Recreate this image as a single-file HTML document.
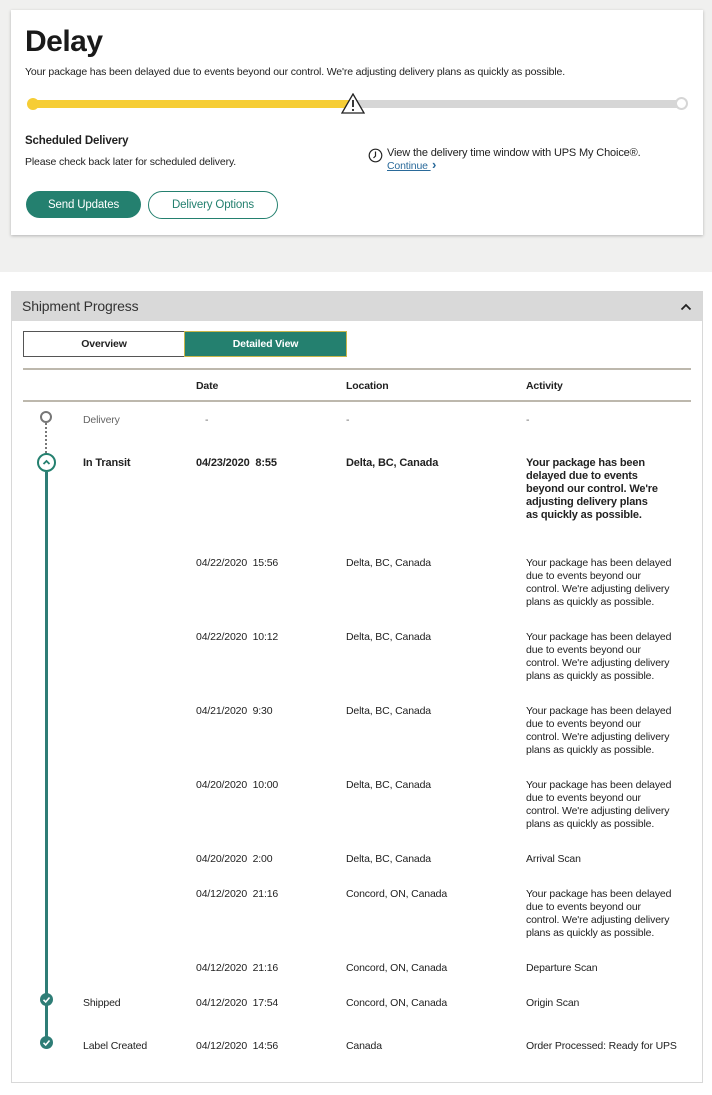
<!DOCTYPE html>
<html><head><meta charset="utf-8"><style>
*{margin:0;padding:0;box-sizing:border-box}
body{width:712px;height:1095px;background:#fff;font-family:"Liberation Sans",sans-serif;font-size:10.5px;letter-spacing:-0.15px;color:#222;position:relative;overflow:hidden}
.a{position:absolute;white-space:nowrap}
.top{position:absolute;left:0;top:0;width:712px;height:272px;background:#f0f0ef}
.card{position:absolute;left:11px;top:10px;width:692px;height:225px;background:#fff;box-shadow:0 1px 3px rgba(0,0,0,.25)}
.panel{position:absolute;left:11px;top:291px;width:692px;height:792px;border:1px solid #d8d8d8}
.hdr{position:absolute;left:0;top:0;width:690px;height:29px;background:#d9d9d9}
.act{line-height:13px}
</style></head><body>
<div class="top"></div>
<div class="card"></div>
<div class="a" style="left:25px;top:25px;font-size:30px;font-weight:bold;letter-spacing:-0.5px;color:#1a1a1a">Delay</div>
<div class="a" style="left:25px;top:66px">Your package has been delayed due to events beyond our control. We're adjusting delivery plans as quickly as possible.</div>
<div class="a" style="left:32px;top:100px;width:320px;height:8px;background:#f6cd35"></div>
<div class="a" style="left:27px;top:98px;width:12px;height:12px;border-radius:50%;background:#f6cd35"></div>
<div class="a" style="left:352px;top:100px;width:330px;height:8px;background:#d6d6d6"></div>
<div class="a" style="left:675px;top:97px;width:13px;height:13px;border-radius:50%;background:#fff;border:2px solid #d6d6d6"></div>
<svg class="a" style="left:341px;top:93px" width="24" height="21" viewBox="0 0 24 21"><path d="M12 1 L23 20 L1 20 Z" fill="#fff" stroke="#222" stroke-width="1.3"/><path d="M12 7v7M12 16v2" stroke="#222" stroke-width="1.8"/></svg>
<div class="a" style="left:25px;top:135px;font-weight:bold;font-size:11.5px">Scheduled Delivery</div>
<div class="a" style="left:25px;top:156px">Please check back later for scheduled delivery.</div>
<svg class="a" style="left:368px;top:148px" width="15" height="15" viewBox="0 0 15 15"><circle cx="7.5" cy="7.5" r="6.3" fill="none" stroke="#222" stroke-width="1.2"/><path d="M7.5 3.5v4.5L5.5 10" fill="none" stroke="#222" stroke-width="1.2"/></svg>
<div class="a" style="left:387px;top:147px;font-size:11px">View the delivery time window with UPS My Choice®.</div>
<div class="a" style="left:387px;top:160px;color:#2a6a9a;text-decoration:underline">Continue&nbsp;</div>
<div class="a" style="left:432px;top:157px;color:#2a6a9a;font-weight:bold;font-size:13px">›</div>
<div class="a" style="left:26px;top:191px;width:115px;height:27px;border-radius:14px;background:#24806f;color:#fff;font-size:11.5px;text-align:center;line-height:28px">Send Updates</div>
<div class="a" style="left:148px;top:191px;width:130px;height:28px;border-radius:14px;border:1px solid #24806f;color:#24806f;font-size:11.5px;text-align:center;line-height:27px">Delivery Options</div>

<div class="panel"><div class="hdr"></div></div>
<div class="a" style="left:22px;top:298px;font-size:14px;color:#333">Shipment Progress</div>
<svg class="a" style="left:680px;top:303px" width="12" height="8" viewBox="0 0 12 8"><path d="M1.5 6.5 6 2l4.5 4.5" fill="none" stroke="#222" stroke-width="1.8"/></svg>
<div class="a" style="left:23px;top:331px;width:162px;height:26px;border:1px solid #555;font-weight:bold;text-align:center;line-height:25px">Overview</div>
<div class="a" style="left:184px;top:331px;width:163px;height:26px;background:#24806f;border:1px solid #c8b64a;color:#fff;font-weight:bold;text-align:center;line-height:25px">Detailed View</div>
<div class="a" style="left:23px;top:368px;width:668px;height:2px;background:#bdb8ad"></div>
<div class="a" style="left:196px;top:380px;font-weight:bold">Date</div>
<div class="a" style="left:346px;top:380px;font-weight:bold">Location</div>
<div class="a" style="left:526px;top:380px;font-weight:bold">Activity</div>
<div class="a" style="left:23px;top:400px;width:668px;height:2px;background:#bdb8ad"></div>

<div class="a" style="left:40px;top:411px;width:12px;height:12px;border-radius:50%;border:2px solid #777"></div>
<div class="a" style="left:45px;top:423px;width:0;height:30px;border-left:2.5px dotted #777"></div>
<div class="a" style="left:37px;top:453px;width:19px;height:19px;border-radius:50%;border:2px solid #24806f;background:#fff"></div>
<svg class="a" style="left:41px;top:457px" width="11" height="11" viewBox="0 0 11 11"><path d="M2.5 7 5.5 4l3 3" fill="none" stroke="#24806f" stroke-width="1.8"/></svg>
<div class="a" style="left:45px;top:472px;width:3px;height:572px;background:#2e7d76"></div>
<div class="a" style="left:40px;top:993px;width:13px;height:13px;border-radius:50%;background:#2e7d76"></div>
<div class="a" style="left:40px;top:1036px;width:13px;height:13px;border-radius:50%;background:#2e7d76"></div>
<svg class="a" style="left:40px;top:993px" width="13" height="13"><path d="M3.5 6.8 5.7 9 9.5 4.5" fill="none" stroke="#fff" stroke-width="1.6"/></svg>
<svg class="a" style="left:40px;top:1036px" width="13" height="13"><path d="M3.5 6.8 5.7 9 9.5 4.5" fill="none" stroke="#fff" stroke-width="1.6"/></svg>

<div class="a" style="left:83px;top:414px;color:#666">Delivery</div>
<div class="a" style="left:205px;top:414px;color:#666">-</div>
<div class="a" style="left:346px;top:414px;color:#666">-</div>
<div class="a" style="left:526px;top:414px;color:#666">-</div>

<div class="a" style="left:83px;top:457px;font-weight:bold;font-size:11px">In Transit</div>
<div class="a" style="left:196px;top:457px;font-weight:bold;font-size:11px">04/23/2020&nbsp; 8:55</div>
<div class="a" style="left:346px;top:457px;font-weight:bold;font-size:11px">Delta, BC, Canada</div>
<div class="a act" style="left:526px;top:457px;font-weight:bold;font-size:11px">Your package has been<br>delayed due to events<br>beyond our control. We're<br>adjusting delivery plans<br>as quickly as possible.</div>

<div class="a" style="left:196px;top:557px">04/22/2020&nbsp; 15:56</div><div class="a" style="left:346px;top:557px">Delta, BC, Canada</div><div class="a act" style="left:526px;top:557px">Your package has been delayed<br>due to events beyond our<br>control. We're adjusting delivery<br>plans as quickly as possible.</div>
<div class="a" style="left:196px;top:631px">04/22/2020&nbsp; 10:12</div><div class="a" style="left:346px;top:631px">Delta, BC, Canada</div><div class="a act" style="left:526px;top:631px">Your package has been delayed<br>due to events beyond our<br>control. We're adjusting delivery<br>plans as quickly as possible.</div>
<div class="a" style="left:196px;top:705px">04/21/2020&nbsp; 9:30</div><div class="a" style="left:346px;top:705px">Delta, BC, Canada</div><div class="a act" style="left:526px;top:705px">Your package has been delayed<br>due to events beyond our<br>control. We're adjusting delivery<br>plans as quickly as possible.</div>
<div class="a" style="left:196px;top:779px">04/20/2020&nbsp; 10:00</div><div class="a" style="left:346px;top:779px">Delta, BC, Canada</div><div class="a act" style="left:526px;top:779px">Your package has been delayed<br>due to events beyond our<br>control. We're adjusting delivery<br>plans as quickly as possible.</div>
<div class="a" style="left:196px;top:853px">04/20/2020&nbsp; 2:00</div><div class="a" style="left:346px;top:853px">Delta, BC, Canada</div><div class="a" style="left:526px;top:853px">Arrival Scan</div>
<div class="a" style="left:196px;top:888px">04/12/2020&nbsp; 21:16</div><div class="a" style="left:346px;top:888px">Concord, ON, Canada</div><div class="a act" style="left:526px;top:888px">Your package has been delayed<br>due to events beyond our<br>control. We're adjusting delivery<br>plans as quickly as possible.</div>
<div class="a" style="left:196px;top:962px">04/12/2020&nbsp; 21:16</div><div class="a" style="left:346px;top:962px">Concord, ON, Canada</div><div class="a" style="left:526px;top:962px">Departure Scan</div>
<div class="a" style="left:83px;top:997px">Shipped</div><div class="a" style="left:196px;top:997px">04/12/2020&nbsp; 17:54</div><div class="a" style="left:346px;top:997px">Concord, ON, Canada</div><div class="a" style="left:526px;top:997px">Origin Scan</div>
<div class="a" style="left:83px;top:1040px">Label Created</div><div class="a" style="left:196px;top:1040px">04/12/2020&nbsp; 14:56</div><div class="a" style="left:346px;top:1040px">Canada</div><div class="a" style="left:526px;top:1040px">Order Processed: Ready for UPS</div>
</body></html>
